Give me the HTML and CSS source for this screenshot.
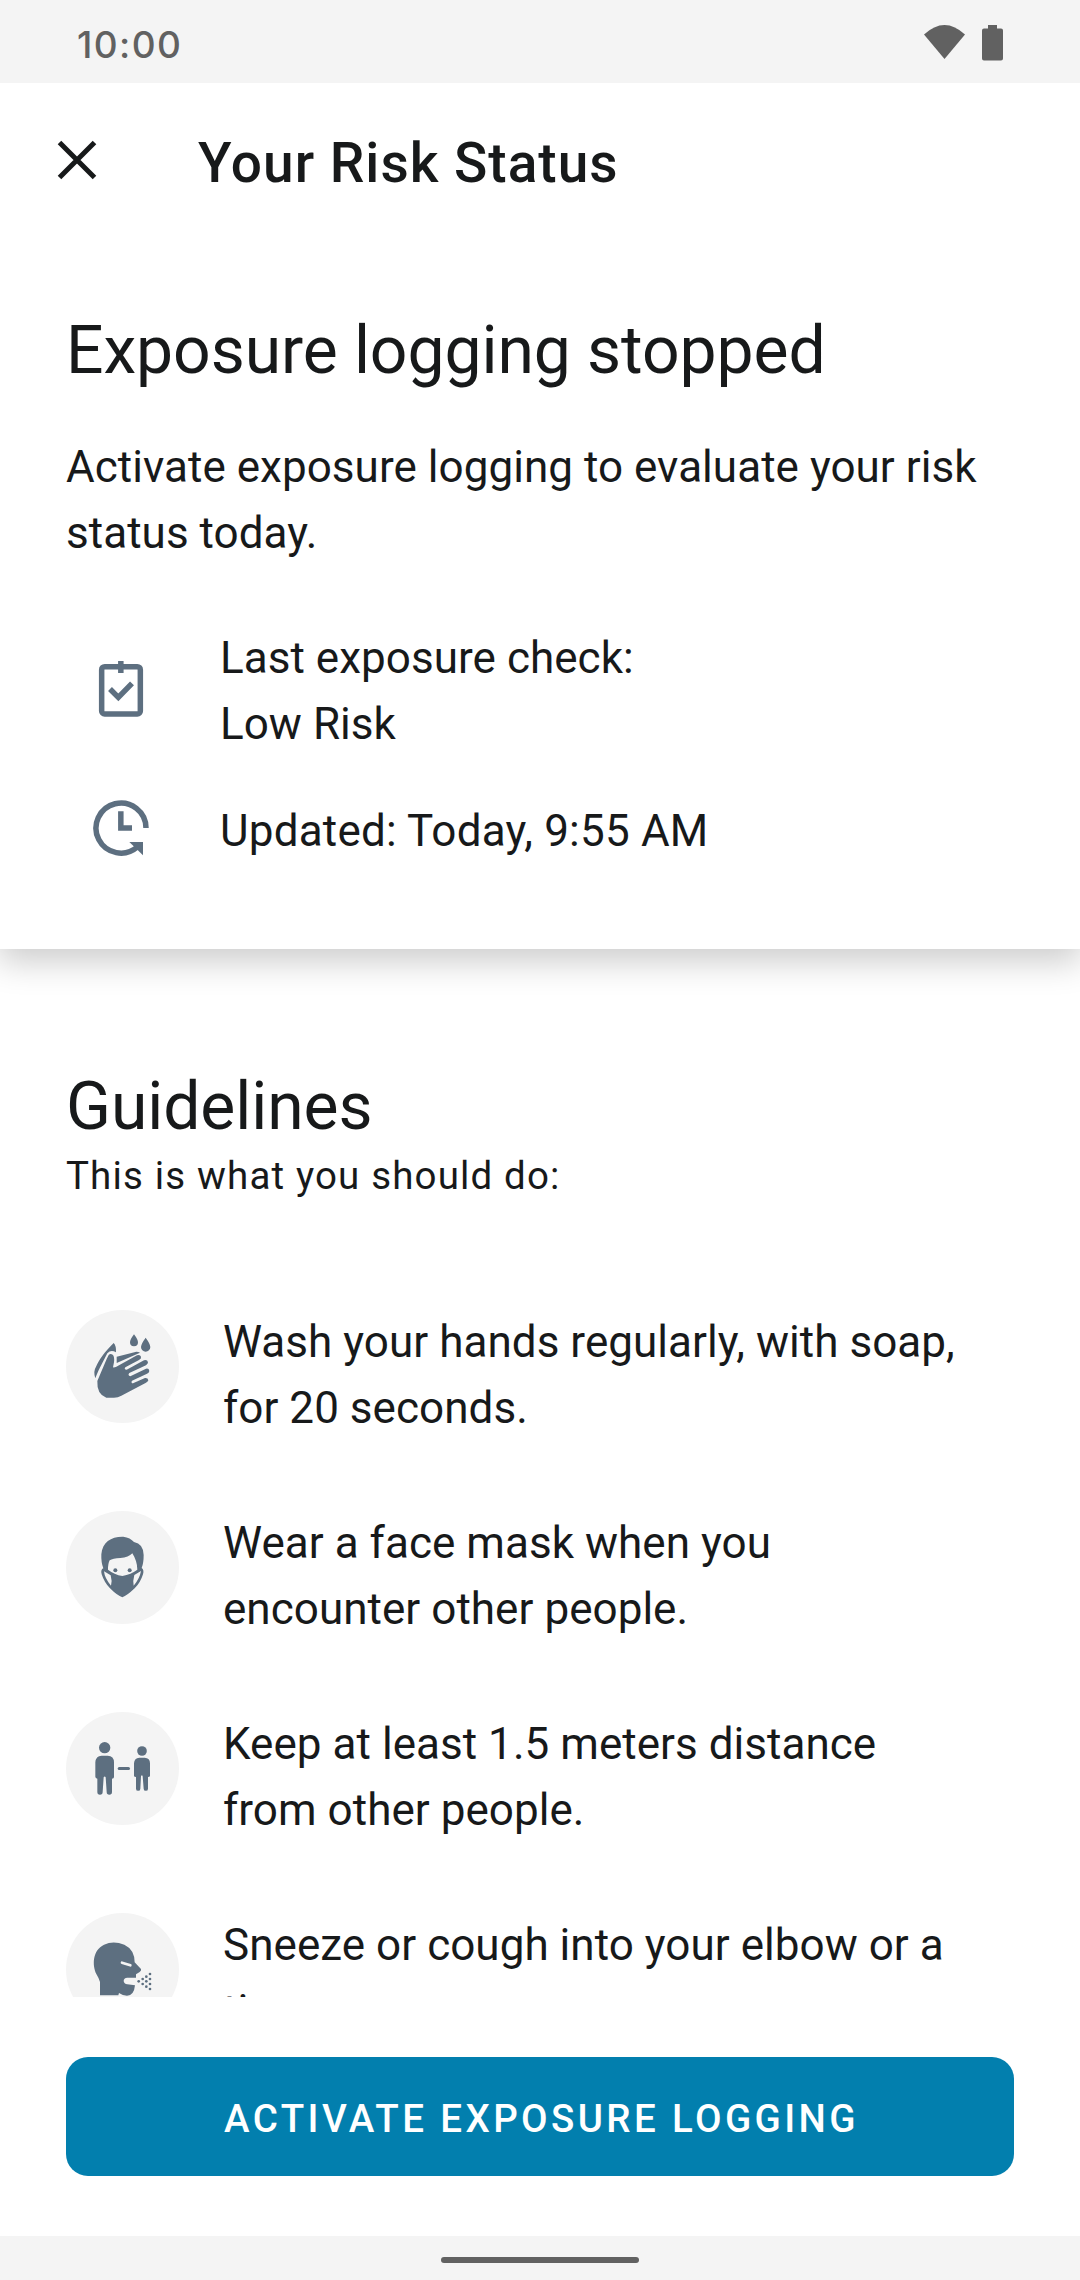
FILE: index.html
```
<!DOCTYPE html>
<html lang="en">
<head>
<meta charset="utf-8">
<title>Your Risk Status</title>
<link rel="stylesheet" href="styles.css">
</head>
<body>
<div class="screen">
  <div class="status-bar">
    <span class="clock">10:00</span>
    <svg class="status-icons" viewBox="0 0 80 38" aria-hidden="true">
      <path d="M0 10.5Q20.500 -8.500 41 10.500L20.500 35Z"/>
      <path d="M64 1h9v3.500h4a2 2 0 0 1 2 2v28a2 2 0 0 1-2 2H60a2 2 0 0 1-2-2v-28a2 2 0 0 1 2-2h4z"/>
    </svg>
  </div>
  <header class="app-bar">
    <svg class="close" viewBox="0 0 40 48" aria-label="Close"><path d="M2.500 6.500L37.500 41.500M37.500 6.500L2.500 41.500"/></svg>
    <h1 class="app-title">Your Risk Status</h1>
  </header>
  <section class="risk-card">
    <h2 class="headline">Exposure logging stopped</h2>
    <p class="body-text">Activate exposure logging to evaluate your risk status today.</p>
    <div class="detail">
      <svg class="detail-icon" viewBox="84 84 198 198" aria-hidden="true">
        <rect x="125" y="110" width="116" height="142" rx="9"/>
        <path d="M182.500 93V129M150 177L175 202L216 160"/>
      </svg>
      <p class="body-text">Last exposure check:<br>Low Risk</p>
    </div>
    <div class="detail">
      <svg class="detail-icon" viewBox="84 504 198 198" aria-hidden="true">
        <path d="M258 594A75 75 0 1 0 232 651M182.500 544V594H216"/>
        <path class="solid" d="M208 636H249V676Z"/>
      </svg>
      <p class="body-text updated">Updated: Today, 9:55 AM</p>
    </div>
  </section>
  <main class="guidelines">
    <h2 class="headline">Guidelines</h2>
    <p class="caption">This is what you should do:</p>
    <ul class="list">
      <li class="item">
        <svg class="item-icon" viewBox="18 30 339 339" aria-hidden="true">
          <path d="M106 235Q99 214 108 200C118 178 132 158 161 129Q169 137 168 157Q153 147 142 160C132 181 119 201 106 235Z"/>
          <path d="M170 170L229 155Q236 155 240 158L170 189Z"/>
          <path d="M112 243L140 177L146 165Q151 159 158 164Q164 169 162 187L159 202Q163 203 169 200L231 166Q240 162 243 170Q245 176 237 180L196 202Q191 209 200 209L252 181Q262 178 264 187Q264 192 258 196L208 219Q202 226 211 229L258 206Q267 204 268 213Q267 219 261 221L216 242Q212 249 219 250L255 234Q264 233 265 241Q264 245 258 248L184 287Q174 293 162 293H139Q110 283 112 243Z"/>
          <path d="M222 103Q234 119 234 127A12 12 0 0 1 210 127Q210 119 222 103ZM257 113Q271 132 271 141A14 14 0 0 1 243 141Q243 132 257 113Z"/>
        </svg>
        <p class="body-text">Wash your hands regularly, with soap, for 20 seconds.</p>
      </li>
      <li class="item">
        <svg class="item-icon" viewBox="18 33 339 339" aria-hidden="true">
          <path fill-rule="evenodd" d="M130 205Q123 188 124 163C127 126 154 109 190 110Q211 113 222 126Q250 131 251 165Q251 190 245 204Q253 209 249 223Q241 249 224 265Q201 287 187 292Q172 287 150 265Q133 248 125 223Q121 209 130 205ZM144 209Q163 224 187 228Q213 223 232 209Q232 184 217 160Q206 172 181 174Q158 175 149 181Q144 190 144 209ZM132 214Q134 235 153 257Q157 243 152 226ZM243 213Q239 236 221 257Q218 243 223 225Z"/>
          <circle cx="166" cy="211" r="6"/><circle cx="209" cy="211" r="6"/>
        </svg>
        <p class="body-text">Wear a face mask when you encounter other people.</p>
      </li>
      <li class="item">
        <svg class="item-icon" viewBox="18 36 339 339" aria-hidden="true">
          <circle cx="134" cy="143" r="17"/>
          <path d="M125 167H143Q162 168 162 187V231Q162 236 156 236V276A7.500 7.500 0 0 1 140 276L137 232Q134 227 131 232L128 276A7.500 7.500 0 0 1 112 276V236Q106 235 106 230V187Q107 168 125 167Z"/>
          <circle cx="246" cy="153" r="14.500"/>
          <path d="M238 173H254Q270 174 270 190V227Q270 231 264 231V266A6.500 6.500 0 0 1 251 266L248 229Q246 223 243 229L241 266A6.500 6.500 0 0 1 228 266V231Q222 231 222 227V190Q223 174 238 173Z"/>
          <rect x="173" y="201" width="37" height="9" rx="4.500"/>
        </svg>
        <p class="body-text">Keep at least 1.5 meters distance from other people.</p>
      </li>
      <li class="item">
        <svg class="item-icon" viewBox="18 39 339 339" aria-hidden="true">
          <path d="M120 286V246Q117 235 109 222C96 193 98 151 132 134Q160 121 193 134Q224 149 224 187L243 207Q245 212 239 216L228 223V233H202Q191 234 191 243Q192 252 202 253L225 256Q222 287 201 287Q188 287 177 279L175 286Z"/>
          <path class="lid" d="M186 188L211 196"/>
          <g><circle cx="236" cy="244" r="4"/><circle cx="248" cy="237" r="4"/><circle cx="248" cy="252" r="4"/><circle cx="259" cy="230" r="4"/><circle cx="259" cy="244" r="4"/><circle cx="259" cy="260" r="4"/><circle cx="270" cy="222" r="4"/><circle cx="270" cy="237" r="4"/><circle cx="270" cy="252" r="4"/><circle cx="270" cy="267" r="4"/></g>
        </svg>
        <p class="body-text">Sneeze or cough into your elbow or a tissue.</p>
      </li>
    </ul>
  </main>
  <footer class="actions">
    <button class="primary" type="button">ACTIVATE EXPOSURE LOGGING</button>
  </footer>
  <div class="nav-bar"><span class="handle"></span></div>
</div>
</body>
</html>
```
FILE: styles.css
```
* {
  box-sizing: border-box;
  margin: 0;
  padding: 0;
}

body {
  background: #fff;
  color: #17191a;
  font-family: Roboto, "Liberation Sans", sans-serif;
}

.screen {
  display: flex;
  flex-direction: column;
  width: 1080px;
  height: 2280px;
  overflow: hidden;
}

.status-bar {
  display: flex;
  flex: none;
  align-items: center;
  justify-content: space-between;
  height: 83px;
  padding: 6px 76px 0 77px;
  background: #f4f4f4;
  color: #616161;
}

.clock {
  font: 500 37px/44px Inter, sans-serif;
  letter-spacing: 1.4px;
}

.status-icons {
  width: 80px;
  height: 38px;
  margin-bottom: 3px;
  fill: #616161;
}

.app-bar {
  display: flex;
  flex: none;
  align-items: center;
  gap: 101px;
  height: 154px;
  padding-left: 57px;
}

.close {
  width: 40px;
  height: 48px;
  fill: none;
  stroke: #17191a;
  stroke-width: 5;
}

.app-title {
  padding-top: 6px;
  font-size: 55px;
  font-weight: 500;
  line-height: 66px;
  letter-spacing: 1px;
}

.risk-card {
  display: flex;
  flex: none;
  flex-direction: column;
  height: 712px;
  padding: 75px 66px 0;
  background: #fff;
  box-shadow: 0 11px 32px 2px rgba(0, 0, 0, 0.2);
  clip-path: inset(0 0 -80px 0);
}

.headline {
  font-size: 66px;
  font-weight: 400;
  line-height: 77px;
  letter-spacing: -0.07px;
}

.body-text {
  font-size: 44px;
  line-height: 66px;
  letter-spacing: 0.04px;
}

.updated {
  letter-spacing: 0.2px;
}

.risk-card > .body-text {
  margin-top: 45px;
}

.detail {
  display: flex;
  align-items: center;
  gap: 66px;
  margin-top: 41px;
  padding-left: 22px;
}

.risk-card > .body-text + .detail {
  margin-top: 59px;
}

.detail-icon {
  flex: none;
  width: 66px;
  height: 66px;
  fill: none;
  stroke: #5d6f80;
  stroke-width: 16.500;
}

.solid {
  fill: #5d6f80;
  stroke: none;
}

.guidelines {
  flex: 1;
  min-height: 0;
  padding: 119px 66px 0;
  overflow: hidden;
}

.caption {
  margin-top: 3px;
  font-size: 38.500px;
  line-height: 55px;
  letter-spacing: 1.15px;
}

.list {
  display: flex;
  flex-direction: column;
  gap: 69px;
  margin-top: 106px;
  list-style: none;
}

.item {
  display: flex;
  gap: 44px;
  padding-right: 44px;
}

.item-icon {
  flex: none;
  width: 113px;
  height: 113px;
  margin-top: 1px;
  border-radius: 50%;
  background: #f4f4f4;
  fill: #5d6f80;
}

.lid {
  fill: none;
  stroke: #f4f4f4;
  stroke-width: 8;
  stroke-linecap: round;
}

.actions {
  flex: none;
  height: 239px;
  padding: 60px 66px;
  background: #fff;
}

.primary {
  display: block;
  width: 100%;
  height: 119px;
  padding: 3px 0 0 3px;
  border: 0;
  border-radius: 22px;
  background: #027fae;
  color: #fff;
  font: 500 38.500px/55px Roboto, sans-serif;
  letter-spacing: 3.400px;
}

.nav-bar {
  display: flex;
  flex: none;
  justify-content: center;
  height: 44px;
  padding-top: 21px;
  background: #f4f4f4;
}

.handle {
  width: 198px;
  height: 6px;
  border-radius: 3px;
  background: #616161;
}
```
